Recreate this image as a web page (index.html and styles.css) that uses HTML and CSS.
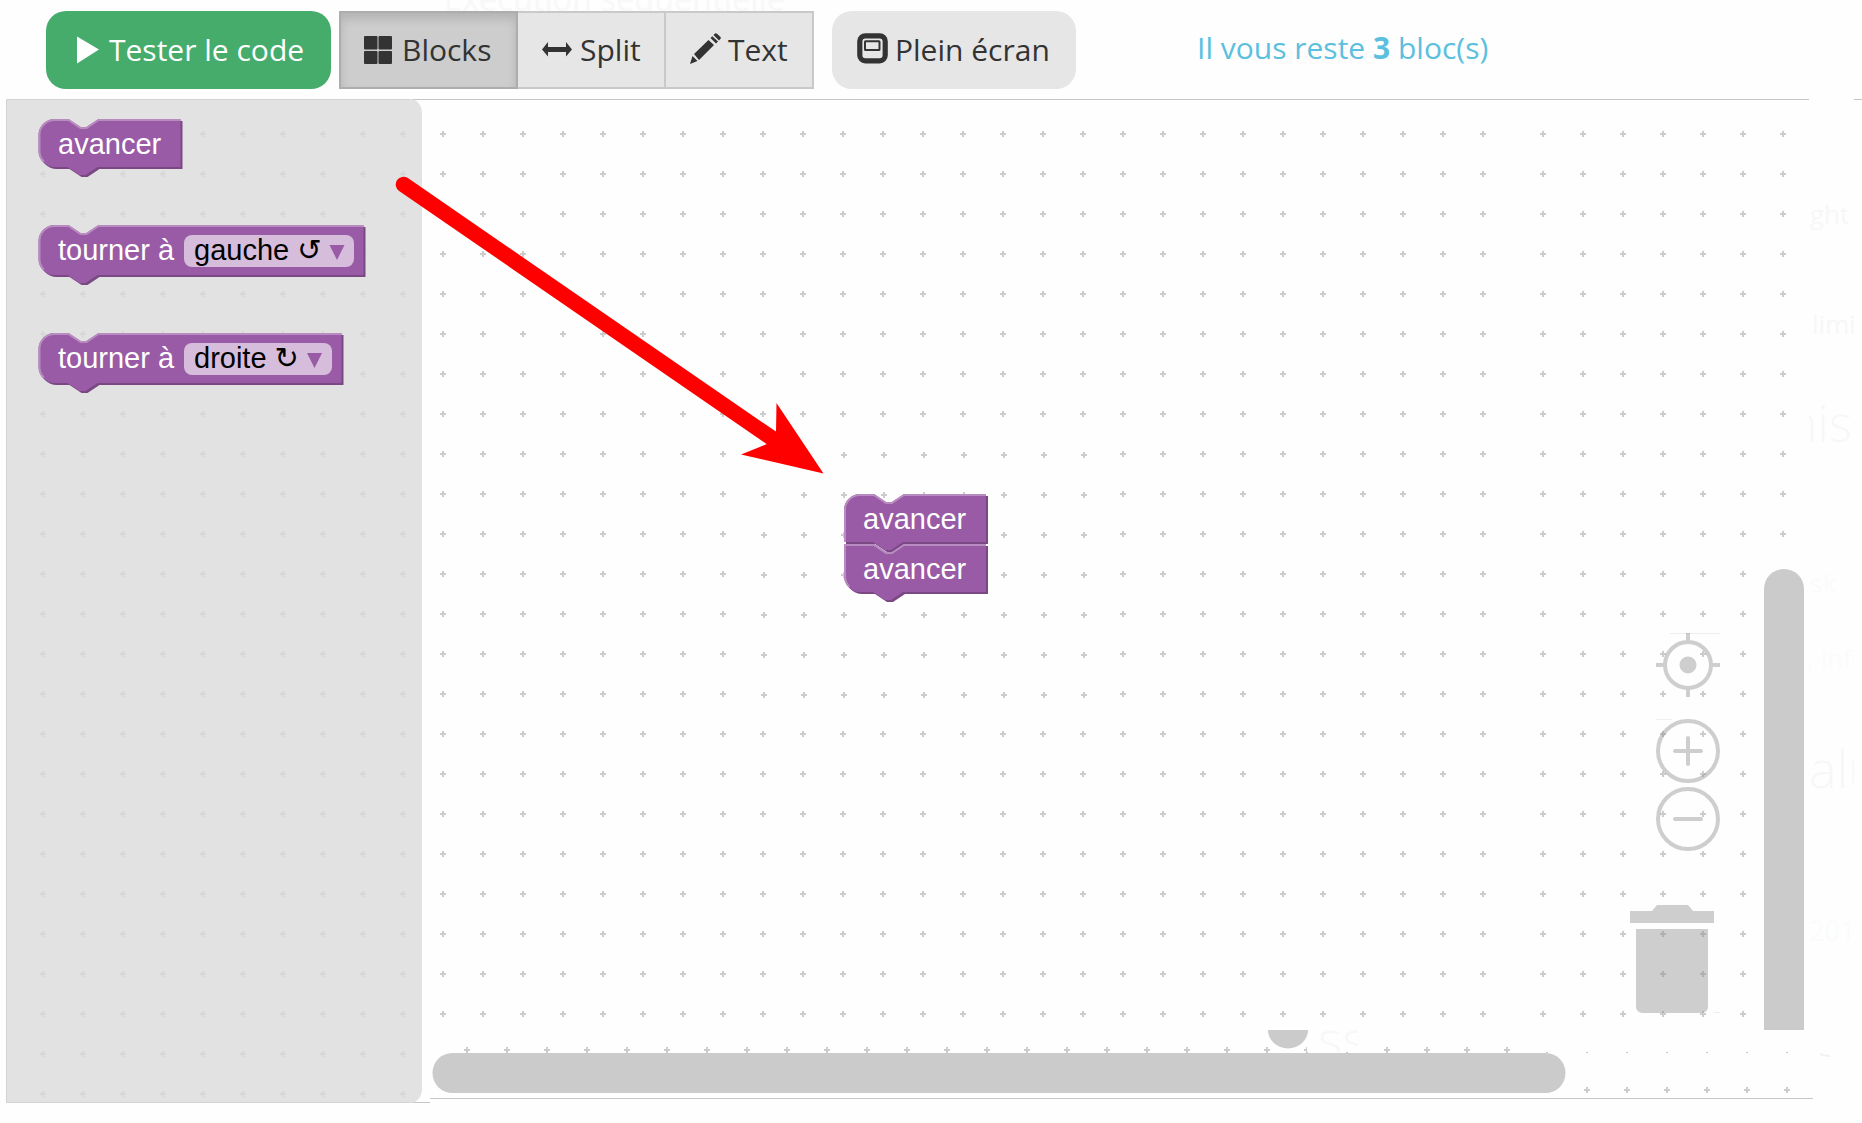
FILE: index.html
```html
<!DOCTYPE html>
<html lang="fr">
<head>
<meta charset="utf-8">
<title>Blocks</title>
<link rel="stylesheet" href="styles.css">
</head>
<body>
<header class="toolbar">
  <button class="btn btn-run"><svg class="icon" viewBox="0 0 28 28"><path d="M0 .5 22 13.500 0 27.500Z"/></svg><span>Tester le code</span></button>
  <div class="modes">
    <button class="btn mode active"><svg class="icon" viewBox="0 0 28 28"><path d="M1 0h11.500q1 0 1 1v11.500q0 1-1 1H1q-1 0-1-1V1q0-1 1-1Zm14.500 0H27q1 0 1 1v11.500q0 1-1 1H15.500q-1 0-1-1V1q0-1 1-1ZM1 15h11.500q1 0 1 1v11q0 1-1 1H1q-1 0-1-1V16q0-1 1-1Zm14.500 0H27q1 0 1 1v11q0 1-1 1H15.500q-1 0-1-1V16q0-1 1-1Z"/></svg><span>Blocks</span></button>
    <button class="btn mode split"><svg class="icon wide" viewBox="0 0 30 28"><path d="M0 13.500 6 6v5h18V6l6 7.500-6 7V16H6v4.500Z"/></svg><span>Split</span></button>
    <button class="btn mode text"><svg class="icon pencil" viewBox="0 0 31 31"><path d="m0 31 2.500-8 5 5ZM4 21 18.500 7l5.500 5L9 27ZM20.500 5l1.800-1.800L28 8.500 26 10.500ZM23.500 2 25 .5q1-.8 2 .2L30.500 4q.8 1-.2 2L29 7.500Z"/></svg><span>Text</span></button>
  </div>
  <button class="btn btn-full"><svg class="icon pencil" viewBox="0 0 31 31"><rect x="2.800" y="2.800" width="25.400" height="25" rx="5.500" fill="none" stroke="#333" stroke-width="5.200"/><rect x="8" y="8.300" width="14.500" height="8.700" rx=".5" fill="none" stroke="#333" stroke-width="2"/></svg><span>Plein écran</span></button>
  <p class="remaining">Il vous reste <strong>3</strong> bloc(s)</p>
</header>
<main class="editor">
<svg class="canvas" width="1862" height="1024" viewBox="0 99 1862 1024">
  <defs>
    <pattern id="grid" width="40" height="40" patternUnits="userSpaceOnUse" x="23" y="114"><path d="M17 19h6v2h-6zM19 17h2v6h-2z" fill="#ccc"/></pattern>
    <pattern id="grid-drag" width="40" height="40" patternUnits="userSpaceOnUse" x="24" y="115"><path d="M17 19h6v2h-6zM19 17h2v6h-2z" fill="#ccc"/></pattern>
    <pattern id="grid-right" width="40" height="40" patternUnits="userSpaceOnUse" x="1523" y="114"><path d="M17 19h6v2h-6zM19 17h2v6h-2z" fill="#ccc"/></pattern>
    <pattern id="grid-foot" width="40" height="40" patternUnits="userSpaceOnUse" x="447" y="1030"><path d="M17 19h6v2h-6zM19 17h2v6h-2z" fill="#ccc"/></pattern>
    <pattern id="grid-dots" width="40" height="40" patternUnits="userSpaceOnUse" x="1007" y="1032"><path d="M19 20h2v1h-2z" fill="#ccc"/></pattern>
    <clipPath id="edge"><rect x="1809" y="99" width="45" height="1024"/></clipPath>
    <clipPath id="foot"><rect x="1315" y="1030" width="43" height="22"/></clipPath>
    <clipPath id="target"><rect x="1656" y="633" width="64" height="64"/></clipPath>
  </defs>

  <!-- workspace grid -->
  <rect x="422" y="99" width="1081" height="927" fill="url(#grid)"/>
  <rect x="1523" y="99" width="280" height="927" fill="url(#grid-right)"/>
  <rect x="752" y="426" width="359" height="284" fill="#fefefe"/>
  <rect x="752" y="426" width="359" height="284" fill="url(#grid-drag)"/>
  <rect x="447" y="1040" width="860" height="14" fill="url(#grid-foot)"/>
  <rect x="1367" y="1040" width="160" height="14" fill="url(#grid-foot)"/>
  <rect x="1007" y="1048" width="360" height="6" fill="url(#grid-dots)"/>
  <rect x="1527" y="1048" width="280" height="6" fill="url(#grid-dots)"/>
  <rect x="1570" y="1080" width="230" height="16" fill="url(#grid-foot)"/>
  <path d="M6 99h1803v1H6ZM1854 99h8v1h-8ZM430 1098h1383v1H430ZM6 1102h424v1H6Z" fill="#c6c6c6"/>

  <!-- faded labels behind the editor -->
  <g class="ghost" clip-path="url(#edge)">
    <text x="1810" y="224" font-size="26">ght</text>
    <text x="1812" y="334" font-size="26">limi</text>
    <text x="1788" y="442" font-size="50" font-weight="300">nis</text>
    <text class="fainter" x="1810" y="593" font-size="26">sk</text>
    <text class="fainter" x="1807" y="668" font-size="26">, info</text>
    <text x="1809" y="788" font-size="52" font-weight="300">alu</text>
    <text class="fainter" x="1809" y="941" font-size="27">2017</text>
  </g>
  <g class="ghost" clip-path="url(#foot)"><text x="1318" y="1058" font-size="52" font-weight="300">ss</text></g>
  <path d="M1820 1054q4 2 10 2" stroke="#f2f2f2" stroke-width="2" fill="none"/>

  <!-- scrollbars -->
  <path d="M1764 1030V589a20 20 0 0 1 40 0v441Z" fill="#cbcbcb"/>
  <path d="M1268 1030a20 18.500 0 0 0 40 0Z" fill="#cbcbcb"/>
  <rect x="432.500" y="1053" width="1133" height="40" rx="20" fill="#cbcbcb"/>

  <!-- zoom controls and bin -->
  <path d="M1670 633h50v1h-50ZM1656 719h16v1h-16ZM1714 1012h6v1h-6Z" fill="#eee"/>
  <g opacity=".4" fill="none" stroke="#888" stroke-width="4">
    <g clip-path="url(#target)"><circle cx="1688" cy="665" r="23"/><path d="M1688 633v8m0 48v8M1656 665h8m48 0h8"/><circle cx="1688" cy="665" r="8.500" fill="#888" stroke="none"/></g>
    <circle cx="1688" cy="751" r="30"/><path d="M1675 751h26M1688 738v26" stroke-linecap="round"/>
    <circle cx="1688" cy="819" r="30"/><path d="M1675 819h26" stroke-linecap="round"/>
    <path d="M1630 911h22l5-6h31l5 6h21v12h-84ZM1636 929h72v77q0 7-7 7h-58q-7 0-7-7Z" fill="#888" stroke="none"/>
  </g>

  <!-- toolbox -->
  <path d="M6 99h404a12 14 0 0 1 12 14v976a12 14 0 0 1-12 14H6Z" fill="#e2e2e2"/>
  <g opacity=".45"><rect x="23" y="114" width="399" height="989" fill="url(#grid)"/></g>
  <path d="M6.500 1102.500V99.500H410M6.500 1102.500H410" fill="none" stroke="#d3d3d3"/>

  <g class="block" transform="translate(38.500 119)">
    <g transform="scale(2)">
      <path class="dark" transform="translate(1 1)" d="M0 8A8 8 0 0 1 8 0H15l6 4h3l6-4H71V24H29.500l-6 4h-3l-6-4H8A8 8 0 0 1 0 16Z"/>
      <path class="fill" d="M0 8A8 8 0 0 1 8 0H15l6 4h3l6-4H71V24H29.500l-6 4h-3l-6-4H8A8 8 0 0 1 0 16Z"/>
      <path class="light" d="M2.700 21.300A7.500 7.500 0 0 1 .5 16V8A7.500 7.500 0 0 1 8 .5H15l6 4h3l6-4H71"/>
    </g>
    <text x="19.500" y="35">avancer</text>
  </g>
  <g class="block" transform="translate(38.500 225)">
    <g transform="scale(2)">
      <path class="dark" transform="translate(1 1)" d="M0 8A8 8 0 0 1 8 0H15l6 4h3l6-4H162.500V25H29.500l-6 4h-3l-6-4H8A8 8 0 0 1 0 17Z"/>
      <path class="fill" d="M0 8A8 8 0 0 1 8 0H15l6 4h3l6-4H162.500V25H29.500l-6 4h-3l-6-4H8A8 8 0 0 1 0 17Z"/>
      <path class="light" d="M2.700 22.300A7.500 7.500 0 0 1 .5 17V8A7.500 7.500 0 0 1 8 .5H15l6 4h3l6-4H162.500"/>
    </g>
    <text x="19.500" y="35">tourner à</text>
    <rect class="field" x="145.500" y="10" width="170" height="32" rx="8"/>
    <text class="value" x="155.500" y="35">gauche <tspan class="sym">↺</tspan></text>
    <path class="fill" d="M291 20h15l-7.500 15Z"/>
  </g>
  <g class="block" transform="translate(38.500 333)">
    <g transform="scale(2)">
      <path class="dark" transform="translate(1 1)" d="M0 8A8 8 0 0 1 8 0H15l6 4h3l6-4H151.500V25H29.500l-6 4h-3l-6-4H8A8 8 0 0 1 0 17Z"/>
      <path class="fill" d="M0 8A8 8 0 0 1 8 0H15l6 4h3l6-4H151.500V25H29.500l-6 4h-3l-6-4H8A8 8 0 0 1 0 17Z"/>
      <path class="light" d="M2.700 22.300A7.500 7.500 0 0 1 .5 17V8A7.500 7.500 0 0 1 8 .5H15l6 4h3l6-4H151.500"/>
    </g>
    <text x="19.500" y="35">tourner à</text>
    <rect class="field" x="145.500" y="10" width="148" height="32" rx="8"/>
    <text class="value" x="155.500" y="35">droite <tspan class="sym">↻</tspan></text>
    <path class="fill" d="M268.500 20h15l-7.500 15Z"/>
  </g>

  <!-- stacked blocks in the workspace -->
  <g class="block" transform="translate(844 494)">
    <g transform="scale(2)">
      <path class="dark" transform="translate(1 1)" d="M0 8A8 8 0 0 1 8 0H15l6 4h3l6-4H71V24H29.500l-6 4h-3l-6-4H0Z"/>
      <path class="fill" d="M0 8A8 8 0 0 1 8 0H15l6 4h3l6-4H71V24H29.500l-6 4h-3l-6-4H0Z"/>
      <path class="light" d="M.5 24V8A7.500 7.500 0 0 1 8 .5H15l6 4h3l6-4H71"/>
      <g transform="translate(0 25)">
        <path class="dark" transform="translate(1 1)" d="M0 0H15l6 4h3l6-4H71V24H29.500l-6 4h-3l-6-4H8A8 8 0 0 1 0 16Z"/>
        <path class="fill" d="M0 0H15l6 4h3l6-4H71V24H29.500l-6 4h-3l-6-4H8A8 8 0 0 1 0 16Z"/>
        <path class="light" d="M2.700 21.300A7.500 7.500 0 0 1 .5 16V.5H15l6 4h3l6-4H71"/>
      </g>
    </g>
    <text x="19" y="35">avancer</text>
    <text x="19" y="85">avancer</text>
  </g>

  <!-- drag arrow -->
  <path d="M403.500 184.500 773 439" stroke="red" stroke-width="15.500" stroke-linecap="round"/>
  <path d="M823.500 473.500 776.500 403 776 431.500 767 444 741 454.500Z" fill="red"/>
</svg>
</main>
<div class="backdrop" aria-hidden="true"><span class="title">Exécution séquentielle</span><span class="deadline">Deadline</span></div>
</body>
</html>
```
FILE: styles.css
```css
* { box-sizing: border-box; }
body {
  margin: 0;
  width: 1862px;
  height: 1123px;
  overflow: hidden;
  position: relative;
  background: #fefefe;
  font-family: "Open Sans", sans-serif;
  color: #333;
}
.toolbar {
  height: 99px;
  padding: 11px 0 0 46px;
  display: flex;
  align-items: flex-start;
}
.btn {
  height: 78px;
  border: 0;
  margin: 0;
  padding: 0;
  display: flex;
  align-items: center;
  font: 30px/40px "Open Sans", sans-serif;
  color: #333;
  background: #e6e6e6;
  white-space: nowrap;
}
.icon { width: 28px; height: 28px; flex: none; fill: currentColor; margin-top: -1px; }
.wide { width: 30px; }
.pencil { width: 31px; height: 31px; margin-top: -4px; }
.btn-run {
  width: 285px;
  padding-left: 31px;
  gap: 4px;
  border-radius: 20px;
  background: #46ac6c;
  color: #fff;
}
.modes { display: flex; margin-left: 8px; }
.mode { border: 2px solid #c9c9c9; border-left: 0; }
.mode.active {
  width: 179px;
  padding-left: 23px;
  gap: 10px;
  border: 2px solid #adadad;
  background: #cdcdcd;
  box-shadow: inset 0 6px 10px rgba(0, 0, 0, .125);
}
.split { width: 148px; padding-left: 24px; gap: 8px; }
.text { width: 148px; padding-left: 24px; gap: 7px; }
.btn-full { width: 244px; margin-left: 18px; padding-left: 25px; gap: 7px; border-radius: 20px; }
.remaining {
  margin: 17px 0 0 121px;
  font-size: 30px;
  line-height: 40px;
  color: #5bc0de;
  white-space: nowrap;
}
.editor { height: 1024px; }
.canvas { display: block; }
.block text { font: 29px "Liberation Sans", Arial, sans-serif; fill: #fff; }
.block text.value { fill: #000; }
.sym { font-family: "DejaVu Sans", sans-serif; }
.fill { fill: #995ba5; }
.dark { fill: #7a4984; }
.light { fill: none; stroke: #b88cc0; stroke-width: 1; }
.field { fill: #d6bddb; }
.ghost text { font-family: "Open Sans", sans-serif; fill: #f7f7f7; }
.ghost .fainter { fill: #fafcfc; }
.backdrop {
  position: absolute;
  inset: 0;
  z-index: -1;
  color: #f8f8f8;
}
.title { position: absolute; left: 444px; top: -31px; height: 42px; overflow: hidden; font-size: 32.5px; line-height: 60px; white-space: nowrap; }
.deadline { position: absolute; left: 1277px; top: 38px; font-size: 24px; line-height: 34px; color: #fafafa; }
```
